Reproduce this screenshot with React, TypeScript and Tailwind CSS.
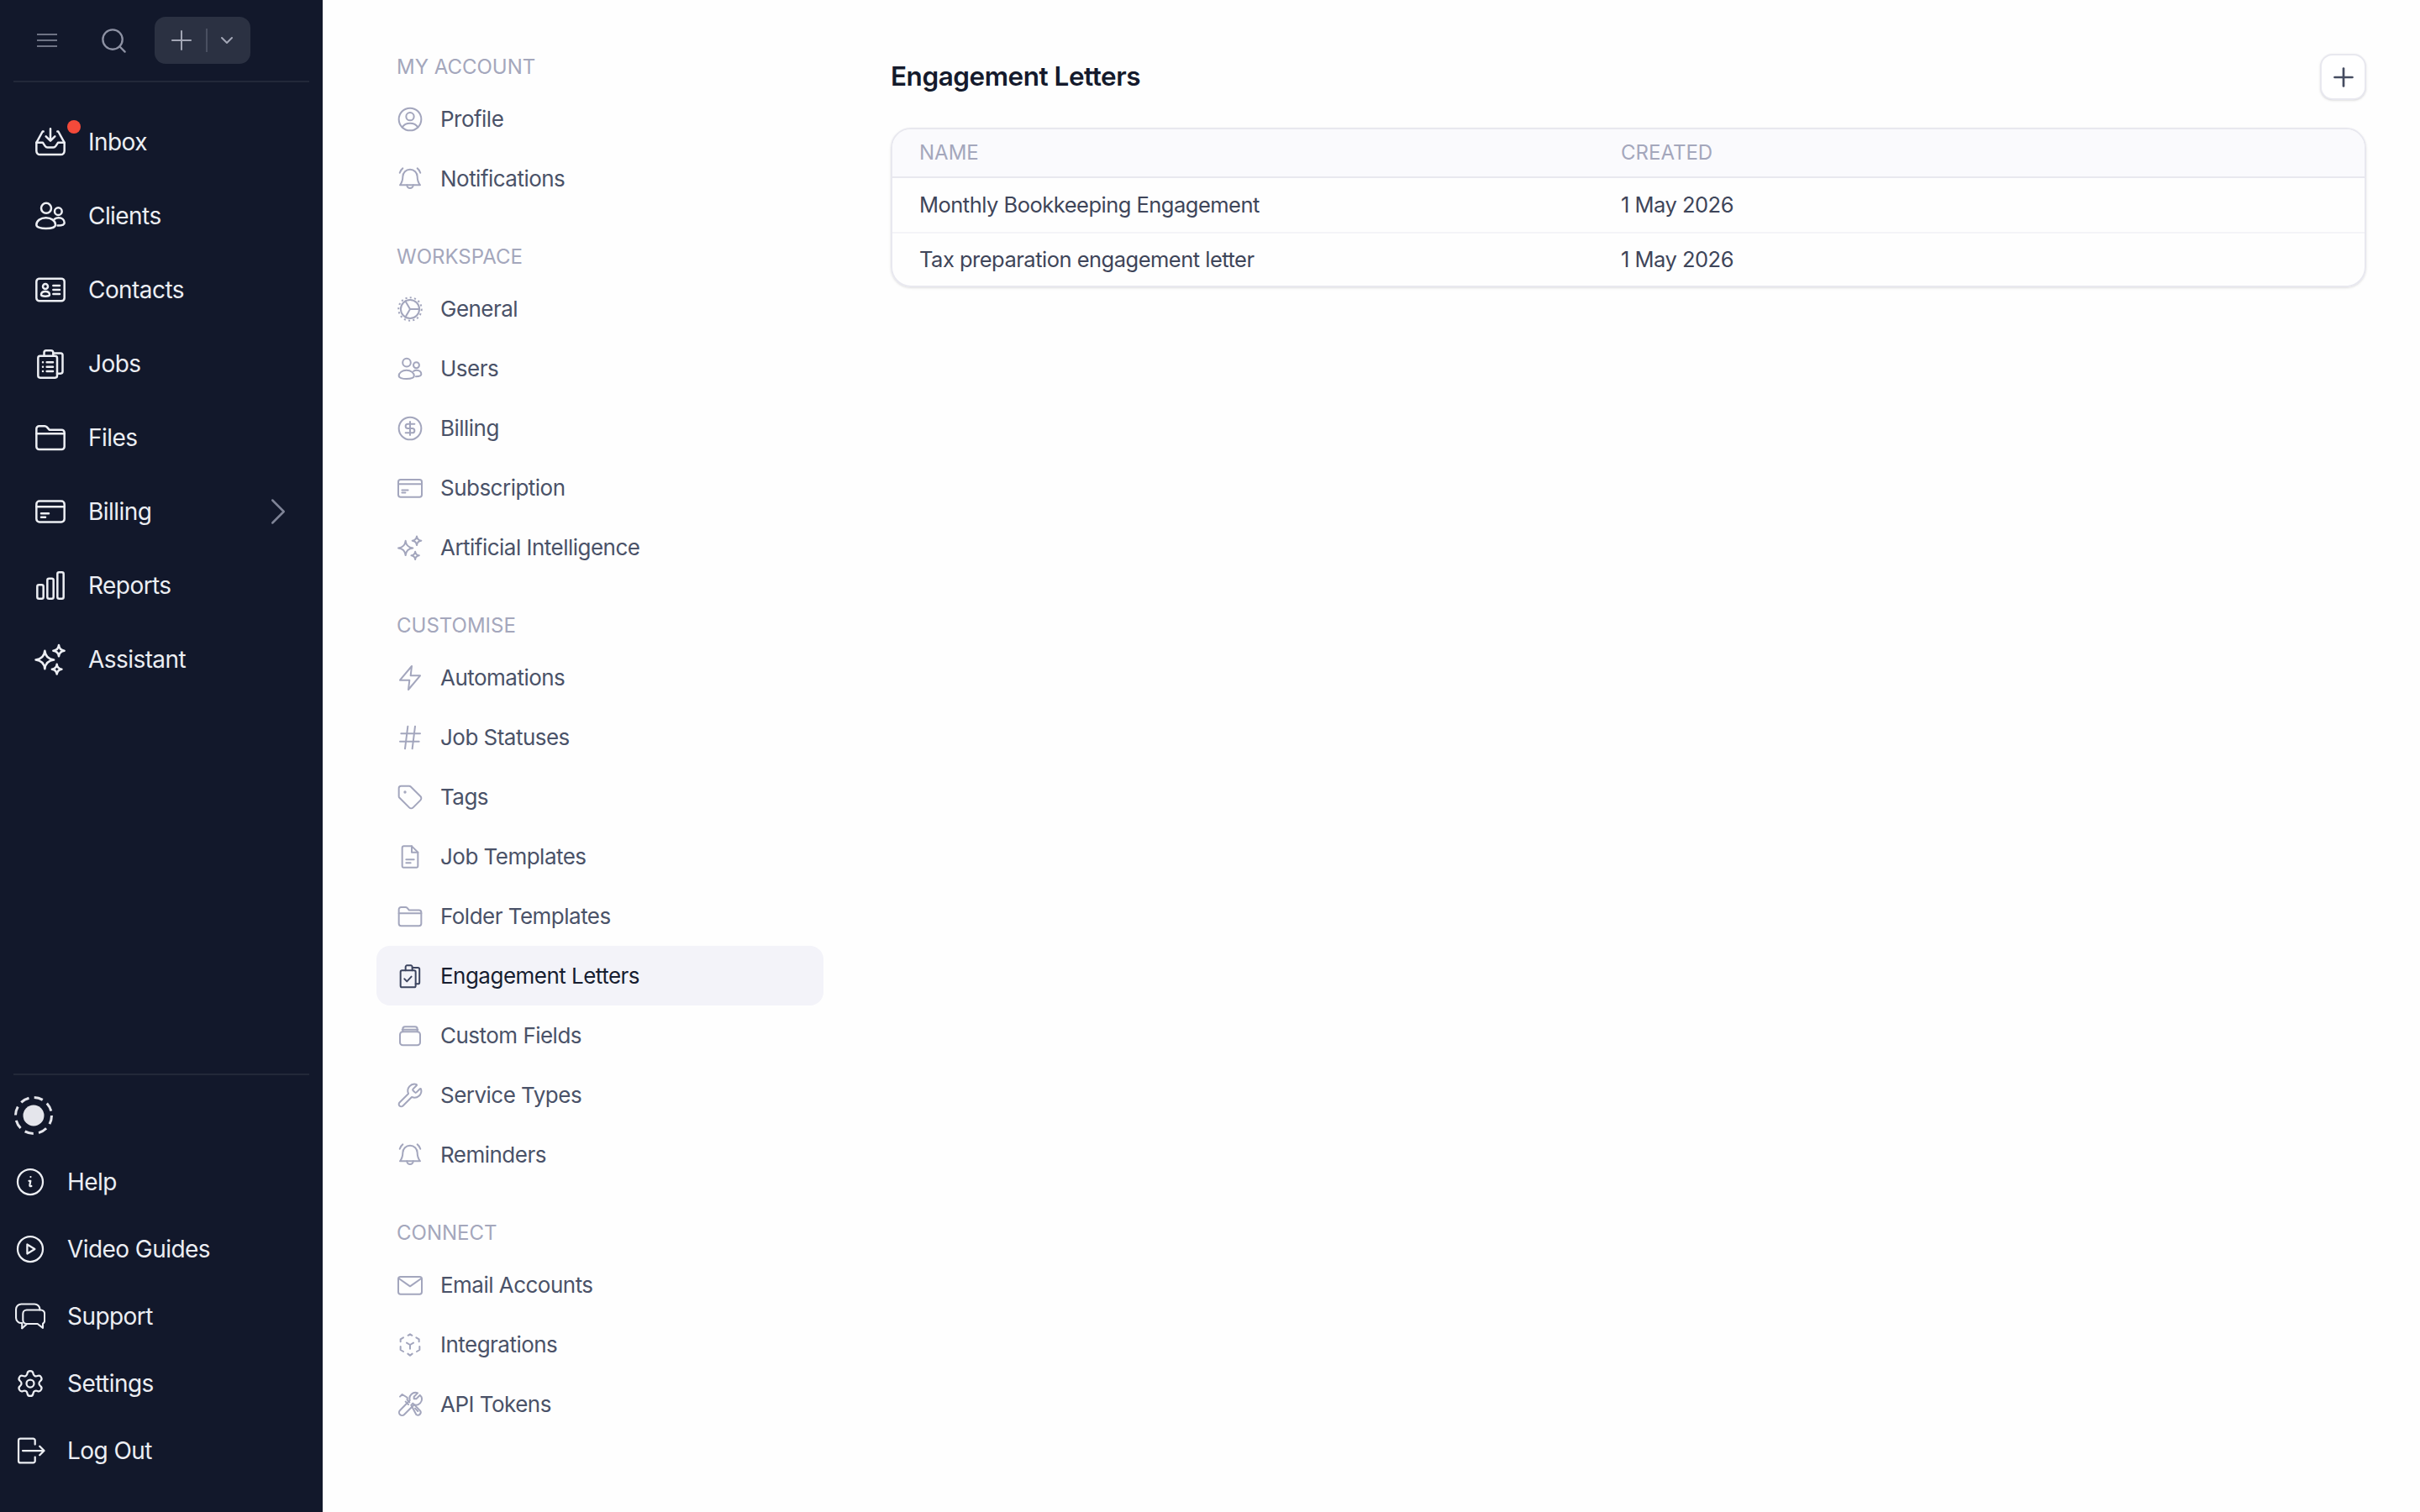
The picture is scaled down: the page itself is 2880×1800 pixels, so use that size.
import type { ReactNode } from 'react'
import { ChevronDown, ChevronRight, CircleDollarSign, Plus, Search, Settings, Tag, Wrench } from 'lucide-react'

function Svg({ children, className, sw = 1.5 }: { children: ReactNode; className: string; sw?: number }) {
  return (
    <svg viewBox="0 0 24 24" fill="none" stroke="currentColor" strokeWidth={sw} strokeLinecap="round" strokeLinejoin="round" className={className}>
      {children}
    </svg>
  )
}

type IconProps = { className: string }

const InboxIcon = ({ className }: IconProps) => (
  <Svg className={className}>
    <path d="M7 4.500h-.6L2 12.500v6A2.500 2.500 0 0 0 4.500 21h15a2.500 2.500 0 0 0 2.500-2.500v-6l-4.400-8H17" />
    <path d="M2 12.500h4.600l1.600 2.400c.4.6 1 1 1.700 1h4.200c.7 0 1.300-.4 1.700-1l1.600-2.400H22" />
    <path d="M12 2.500v8.500M8.800 8l3.200 3.200L15.200 8" />
  </Svg>
)
const UsersIcon = ({ className }: IconProps) => (
  <Svg className={className}>
    <circle cx="9" cy="6.500" r="3.600" />
    <circle cx="17.600" cy="8.800" r="2.600" />
    <path d="M2 18.400c0-3 3-5 6.800-5s6.800 2 6.800 5c0 1.600-3 2.600-6.800 2.600S2 20 2 18.400z" />
    <path d="M15 14.200c.8-.6 1.800-.9 2.900-.9 2.400 0 4.100 1.500 4.100 3.600 0 1.300-1.700 2-4.800 2" />
  </Svg>
)
const ContactIcon = ({ className }: IconProps) => (
  <Svg className={className}>
    <rect x="2" y="4" width="20" height="16" rx="2.200" />
    <circle cx="8.400" cy="9.600" r="1.800" />
    <path d="M5.400 15.600c0-1.500 1.300-2.400 3-2.400s3 .9 3 2.400c0 .6-1.300 1-3 1s-3-.4-3-1z" />
    <path d="M14 9h4.600M14 12h4.600M14 15h4.600" />
  </Svg>
)
const JobsIcon = ({ className }: IconProps) => (
  <Svg className={className}>
    <rect x="3.200" y="6.500" width="13.600" height="15.500" rx="1.400" />
    <path d="M7.500 6.500V4A1.500 1.500 0 0 1 9 2.500h3.500A1.500 1.500 0 0 1 14 4v2.500" />
    <path d="M14 4.500h5.300a1.400 1.400 0 0 1 1.400 1.400v11.700a1.400 1.400 0 0 1-1.400 1.400h-2.500" />
    <path d="M6.600 11h.01M6.600 14.200h.01M6.600 17.400h.01M9.400 11h4.400M9.400 14.200h4.400M9.400 17.400h4.400" />
  </Svg>
)
const FolderIcon = ({ className }: IconProps) => (
  <Svg className={className}>
    <path d="M2 5.700a2 2 0 0 1 2-2h3.900c.6 0 1.200.3 1.600.7l1.700 2H20a2 2 0 0 1 2 2v10a2 2 0 0 1-2 2H4a2 2 0 0 1-2-2z" />
    <path d="M2 9.200h20" />
  </Svg>
)
const CardIcon = ({ className }: IconProps) => (
  <Svg className={className}>
    <rect x="2" y="4.500" width="20" height="15" rx="2.200" />
    <path d="M2 8.500h20M5.400 13.400h5.400M5.400 16h3" />
  </Svg>
)
const BarsIcon = ({ className }: IconProps) => (
  <Svg className={className}>
    <rect x="2.600" y="11.500" width="4.400" height="10" rx="1.200" />
    <rect x="9.800" y="7" width="4.400" height="14.500" rx="1.200" />
    <rect x="17" y="2.500" width="4.400" height="19" rx="1.200" />
  </Svg>
)
const SparkIcon = ({ className }: IconProps) => (
  <Svg className={className}>
    <path d="M8 5.800Q8.600 11.700 14.500 12.300 8.600 12.900 8 18.800 7.400 12.900 1.500 12.300 7.400 11.700 8 5.800Z" />
    <path d="M18 1.800Q18.400 5.400 22 5.800 18.400 6.200 18 9.800 17.600 6.200 14 5.800 17.600 5.400 18 1.800Z" />
    <path d="M16.600 15.500Q17 18.600 20.100 19 17 19.400 16.600 22.500 16.200 19.400 13.100 19 16.200 18.600 16.600 15.500Z" />
  </Svg>
)
const InfoIcon = ({ className }: IconProps) => (
  <Svg className={className}>
    <circle cx="12" cy="12" r="10" />
    <path d="M12.300 8h.01M11 11.200h1.200l-.6 3.400c-.1.800.4 1.100 1.300.7" />
  </Svg>
)
const PlayIcon = ({ className }: IconProps) => (
  <Svg className={className}>
    <circle cx="12" cy="12" r="10" />
    <path d="M9.600 8.300v7.400l6-3.700z" />
  </Svg>
)
const ChatIcon = ({ className }: IconProps) => (
  <Svg className={className} sw={1.400}>
    <path d="M5.500 21.500v-4.200A4.200 4.200 0 0 1 .7 13V6.500A4.200 4.200 0 0 1 4.900 2.300h10.500a4.200 4.200 0 0 1 4.200 4.200v.5" />
    <path d="M5.500 21.500l4-3.500h8.300l4.200 3.200v-3.400a2.600 2.600 0 0 0 1.400-2.300V10a3 3 0 0 0-3-3H9.200a3 3 0 0 0-3 3v5a3 3 0 0 0 3 3" />
  </Svg>
)
const LogoutIcon = ({ className }: IconProps) => (
  <Svg className={className}>
    <path d="M15.800 7V3.900a1.500 1.500 0 0 0-1.500-1.500H4.200a1.500 1.500 0 0 0-1.500 1.500v16.200a1.500 1.500 0 0 0 1.500 1.500h10.100a1.500 1.500 0 0 0 1.500-1.500V17" />
    <path d="M6 12h17M19.500 8.500 23 12l-3.500 3.500" />
  </Svg>
)
const UserCircleIcon = ({ className }: IconProps) => (
  <Svg className={className}>
    <circle cx="12" cy="12" r="10" />
    <circle cx="12" cy="9.500" r="3.500" />
    <path d="M5 19.200c1.500-2.500 4-3.700 7-3.700s5.500 1.200 7 3.700" />
  </Svg>
)
const BellIcon = ({ className }: IconProps) => (
  <Svg className={className}>
    <path d="M12 3.500A6.500 6.500 0 0 0 5.500 10c0 4-1.300 6-2.500 7.500h18c-1.200-1.500-2.500-3.500-2.500-7.500A6.500 6.500 0 0 0 12 3.500z" />
    <path d="M9.200 17.500a2.800 2.800 0 0 0 5.600 0" />
    <path d="M2.800 6.500C3.300 4.800 4.200 3.500 5.500 2.500M21.200 6.500c-.5-1.700-1.400-3-2.700-4" />
  </Svg>
)
const CogIcon = ({ className }: IconProps) => (
  <Svg className={className}>
    <circle cx="12" cy="12" r="8.300" />
    <circle cx="12" cy="12" r="10.300" strokeDasharray="1.600 2.400" strokeLinecap="butt" />
    <path d="M12 12h8.300M12 12 7.850 4.800M12 12l-4.150 7.200" />
  </Svg>
)
const SubscriptionIcon = ({ className }: IconProps) => (
  <Svg className={className}>
    <rect x="1.500" y="4.500" width="21" height="15.500" rx="2" />
    <path d="M1.500 8.500h21M4.800 13.800h5.400M4.800 16.200h3" />
  </Svg>
)
const BoltIcon = ({ className }: IconProps) => (
  <Svg className={className}>
    <path d="M13.500 1.500 3 14h8.500l-1 8.500L21 10h-8.500z" />
  </Svg>
)
const HashIcon = ({ className }: IconProps) => (
  <Svg className={className}>
    <path d="M4 8.500h17M3 15.500h17M10 2 7.500 22M16.500 2 14 22" />
  </Svg>
)
const FileIcon = ({ className }: IconProps) => (
  <Svg className={className}>
    <path d="M6.500 2.500h7l5.500 5.500v12.500a1 1 0 0 1-1 1H6a1 1 0 0 1-1-1V4a1.500 1.500 0 0 1 1.500-1.500z" />
    <path d="M13.500 2.500V8H19M8.500 14.500h7M8.500 17.500h4" />
  </Svg>
)
const ClipCheckIcon = ({ className }: IconProps) => (
  <Svg className={className}>
    <rect x="3.500" y="7" width="13.500" height="15" rx="1.400" />
    <path d="M8 7V3.800a1.300 1.300 0 0 1 1.300-1.300h3.400A1.300 1.300 0 0 1 14 3.800V7" />
    <path d="M14 4.500h5a1.400 1.400 0 0 1 1.400 1.400v11.700a1.400 1.400 0 0 1-1.400 1.400h-2" />
    <path d="m7 14.500 2.200 2.300 4-4.300" />
  </Svg>
)
const FieldsIcon = ({ className }: IconProps) => (
  <Svg className={className}>
    <rect x="3" y="8.500" width="18" height="12" rx="2.500" />
    <path d="M5.500 8.500V6a2 2 0 0 1 2-2h9a2 2 0 0 1 2 2v2.500M5 6.500h14" />
  </Svg>
)
const MailIcon = ({ className }: IconProps) => (
  <Svg className={className}>
    <rect x="1.500" y="4.500" width="21" height="15.500" rx="2" />
    <path d="m2 6 10 7 10-7" />
  </Svg>
)
const IntegrationIcon = ({ className }: IconProps) => (
  <Svg className={className}>
    <path d="M10.200 3.600 12 2.500l1.800 1.100M17.500 5.500l2.500 1.500v2.200M20.500 13.500v3L18 18M14 20l-2 1.500L10 20M6 18l-2.500-1.500v-3M3.500 9.200V7L6 5.500" />
    <path d="M12 12v3.500M12 12 9 10.200M12 12l3-1.800" />
  </Svg>
)
const ToolsIcon = ({ className }: IconProps) => (
  <Svg className={className}>
    <path d="M3 5 5 3l4.500 2.800v2.200l2 2M8 9.500 10.500 12" />
    <path d="M13 12.500l1.500-1.500 6.500 6.500a2.500 2.500 0 0 1-3.500 3.500zM16.500 15.500l2.500 2.500" />
    <path d="M20.800 3.700 17.500 7H15.500V5l3.300-3.200a5.300 5.300 0 0 0-7 6.500L3 17.200a2.600 2.600 0 0 0 3.800 3.800l8.800-8.800a5.300 5.300 0 0 0 6.500-7z" />
  </Svg>
)

const mainNav = [
  { label: 'Inbox', icon: InboxIcon, dot: true },
  { label: 'Clients', icon: UsersIcon },
  { label: 'Contacts', icon: ContactIcon },
  { label: 'Jobs', icon: JobsIcon },
  { label: 'Files', icon: FolderIcon },
  { label: 'Billing', icon: CardIcon, arrow: true },
  { label: 'Reports', icon: BarsIcon },
  { label: 'Assistant', icon: SparkIcon },
]

const footerNav = [
  { label: 'Help', icon: InfoIcon },
  { label: 'Video Guides', icon: PlayIcon },
  { label: 'Support', icon: ChatIcon },
  { label: 'Settings', icon: Settings },
  { label: 'Log Out', icon: LogoutIcon },
]

const settingsNav = [
  {
    title: 'My Account',
    items: [
      { label: 'Profile', icon: UserCircleIcon },
      { label: 'Notifications', icon: BellIcon },
    ],
  },
  {
    title: 'Workspace',
    items: [
      { label: 'General', icon: CogIcon },
      { label: 'Users', icon: UsersIcon },
      { label: 'Billing', icon: CircleDollarSign },
      { label: 'Subscription', icon: SubscriptionIcon },
      { label: 'Artificial Intelligence', icon: SparkIcon },
    ],
  },
  {
    title: 'Customise',
    items: [
      { label: 'Automations', icon: BoltIcon },
      { label: 'Job Statuses', icon: HashIcon },
      { label: 'Tags', icon: Tag },
      { label: 'Job Templates', icon: FileIcon },
      { label: 'Folder Templates', icon: FolderIcon },
      { label: 'Engagement Letters', icon: ClipCheckIcon, active: true },
      { label: 'Custom Fields', icon: FieldsIcon },
      { label: 'Service Types', icon: Wrench },
      { label: 'Reminders', icon: BellIcon },
    ],
  },
  {
    title: 'Connect',
    items: [
      { label: 'Email Accounts', icon: MailIcon },
      { label: 'Integrations', icon: IntegrationIcon },
      { label: 'API Tokens', icon: ToolsIcon },
    ],
  },
]

const letters = [
  { name: 'Monthly Bookkeeping Engagement', created: '1 May 2026' },
  { name: 'Tax preparation engagement letter', created: '1 May 2026' },
]

function Sidebar() {
  return (
    <aside className="flex h-full w-[384px] shrink-0 flex-col bg-[#12182b] text-[#eceef3]">
      <div className="mx-4 flex h-[98px] shrink-0 items-center border-b-2 border-[#222839] pl-7">
        <svg viewBox="0 0 24 16" className="h-4 w-6 text-[#8d91a3]" fill="none" stroke="currentColor" strokeWidth="1.600">
          <path d="M0 1h24M0 8h24M0 15h24" />
        </svg>
        <Search className="ml-[50px] h-[35px] w-[35px] text-[#8d91a3]" strokeWidth={1.600} />
        <div className="ml-[31px] flex h-[56px] w-[114px] items-center rounded-[13px] bg-[#2b3142] pl-[13px] text-[#a3a7b6]">
          <Plus className="h-[38px] w-[38px]" strokeWidth={1.250} />
          <div className="ml-[10px] h-[28px] w-[2px] bg-[#4a5061]" />
          <ChevronDown className="ml-[11px] h-[24px] w-[24px]" strokeWidth={2} />
        </div>
      </div>

      <nav className="mt-[27px] flex flex-col">
        {mainNav.map(({ label, icon: Icon, dot, arrow }) => (
          <div key={label} className="relative flex h-[88px] items-center pl-10 pr-[26px]">
            <Icon className="h-[40px] w-[40px] shrink-0" />
            {dot && <span className="absolute left-[80px] top-[18px] h-4 w-4 rounded-full bg-[#f44a3a]" />}
            <span className="ml-[25px] text-[28px] tracking-[-0.02em]">{label}</span>
            {arrow && <ChevronRight className="ml-auto h-[54px] w-[54px] text-[#7f8497]" strokeWidth={1.100} />}
          </div>
        ))}
      </nav>

      <div className="mx-4 mt-auto border-t-2 border-[#222839] pt-[24px]">
        <svg viewBox="0 0 48 48" className="h-[48px] w-[48px]" fill="none">
          <circle cx="24" cy="24" r="21.500" stroke="#e4e5eb" strokeWidth="3" strokeDasharray="10.500 6.400" />
          <circle cx="24" cy="24" r="12.500" fill="#e4e5eb" />
        </svg>
      </div>
      <nav className="mb-[33px] mt-[15px] flex flex-col">
        {footerNav.map(({ label, icon: Icon }) => (
          <div key={label} className="flex h-[80px] items-center pl-[18px]">
            <Icon className="h-[36px] w-[36px] shrink-0" strokeWidth={1.500} />
            <span className="ml-[26px] text-[28px] tracking-[-0.02em]">{label}</span>
          </div>
        ))}
      </nav>
    </aside>
  )
}

function SettingsNav() {
  return (
    <nav className="ml-16 flex w-[532px] shrink-0 flex-col pt-[60px]">
      {settingsNav.map((group, i) => (
        <div key={group.title} className={i > 0 ? 'mt-[38px]' : ''}>
          <div className="mb-[6px] flex h-[40px] items-center pl-6 text-[24px] uppercase text-[#a4a7bc]">{group.title}</div>
          {group.items.map(({ label, icon: Icon, active }: { label: string; icon: any; active?: boolean }) => (
            <div key={label} className={`flex h-[71px] items-center rounded-[16px] pl-[24px] ${active ? 'bg-[#f3f3f9] text-[#171d30]' : 'text-[#4a5268]'}`}>
              <Icon className={`h-[32px] w-[32px] shrink-0 ${active ? 'text-[#3d4560]' : 'text-[#a3a6bd]'}`} strokeWidth={1.500} />
              <span className="ml-[20px] text-[26px] tracking-[-0.02em]">{label}</span>
            </div>
          ))}
        </div>
      ))}
    </nav>
  )
}

function Letters() {
  return (
    <main className="ml-[80px] mr-16 min-w-0 flex-1">
      <div className="flex h-[152px] items-start justify-between pt-[64px]">
        <h1 className="text-[31.500px] font-semibold leading-[54px] tracking-[-0.015em] text-[#141a2c]">Engagement Letters</h1>
        <button className="flex h-[55px] w-[55px] items-center justify-center rounded-[15px] border-2 border-[#e8e8ef] bg-white text-[#454c60] shadow-sm">
          <Plus className="h-[36px] w-[36px]" strokeWidth={1.800} />
        </button>
      </div>
      <div className="overflow-hidden rounded-[24px] border-2 border-[#e8e8ef] shadow-sm">
        <div className="grid h-[58px] grid-cols-[835px_1fr] items-center border-b-2 border-[#e8e8ef] bg-[#fafafd] pl-[32px] text-[24px] uppercase text-[#a4a7bc]">
          <div>Name</div>
          <div>Created</div>
        </div>
        {letters.map((row, i) => (
          <div key={row.name} className={`grid h-[64px] grid-cols-[835px_1fr] items-center pl-[32px] text-[25.500px] tracking-[-0.02em] text-[#3e4559] ${i > 0 ? 'border-t-2 border-[#f4f4f8]' : ''}`}>
            <div>{row.name}</div>
            <div>{row.created}</div>
          </div>
        ))}
      </div>
    </main>
  )
}

export default function App() {
  return (
    <div className="flex h-[1800px] w-[2880px] overflow-hidden bg-[#fefefe] font-['Inter',sans-serif]">
      <Sidebar />
      <SettingsNav />
      <Letters />
    </div>
  )
}
